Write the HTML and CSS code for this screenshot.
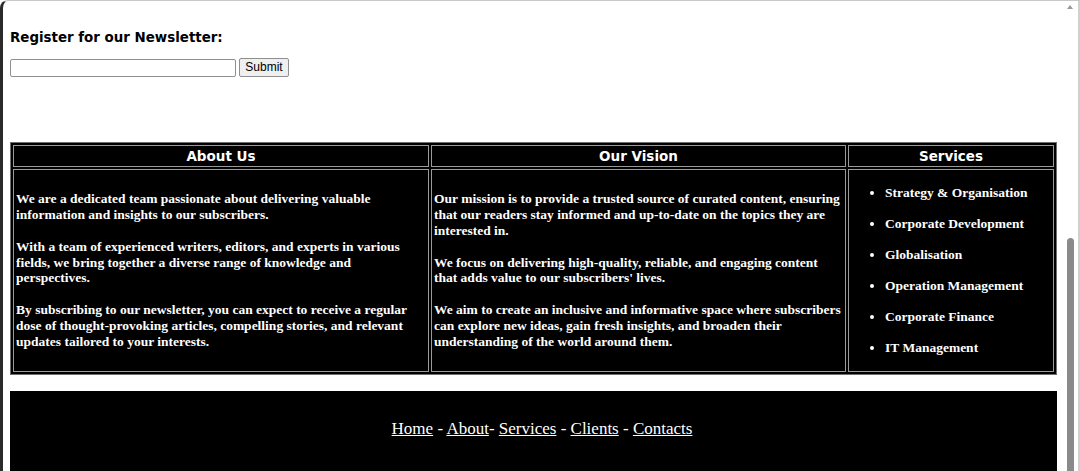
FILE: index.html
```html
<!DOCTYPE html>
<html>
<head>
<meta charset="utf-8">
<link rel="stylesheet" href="styles.css">
</head>
<body>
<div class="frame">
  <div class="page">
    <h3 class="nl-title">Register for our Newsletter:</h3>
    <form class="nl-form">
      <input class="nl-input" type="text">
      <button class="nl-btn" type="button">Submit</button>
    </form>
    <table class="info">
      <tr>
        <th class="c1">About Us</th>
        <th class="c2">Our Vision</th>
        <th class="c3">Services</th>
      </tr>
      <tr>
        <td>
          <p>We are a dedicated team passionate about delivering valuable information and insights to our subscribers.</p>
          <p>With a team of experienced writers, editors, and experts in various fields, we bring together a diverse range of knowledge and perspectives.</p>
          <p>By subscribing to our newsletter, you can expect to receive a regular dose of thought-provoking articles, compelling stories, and relevant updates tailored to your interests.</p>
        </td>
        <td>
          <p>Our mission is to provide a trusted source of curated content, ensuring that our readers stay informed and up-to-date on the topics they are interested in.</p>
          <p>We focus on delivering high-quality, reliable, and engaging content that adds value to our subscribers' lives.</p>
          <p>We aim to create an inclusive and informative space where subscribers can explore new ideas, gain fresh insights, and broaden their understanding of the world around them.</p>
        </td>
        <td>
          <ul class="services">
            <li>Strategy &amp; Organisation</li>
            <li>Corporate Development</li>
            <li>Globalisation</li>
            <li>Operation Management</li>
            <li>Corporate Finance</li>
            <li>IT Management</li>
          </ul>
        </td>
      </tr>
    </table>
    <footer class="foot">
      <a href="#">Home</a> - <a href="#">About</a>- <a href="#">Services</a> - <a href="#">Clients</a> - <a href="#">Contacts</a>
    </footer>
  </div>
  <div class="scrollbar">
    <div class="arrow"></div>
    <div class="thumb"></div>
  </div>
</div>
</body>
</html>
```

FILE: styles.css
```css
html, body {
  margin: 0;
  padding: 0;
  background: #fff;
  overflow: hidden;
}
.frame {
  display: flex;
  height: 471px;
  box-sizing: border-box;
  border-left: 3px solid #2b2b2b;
  border-top: 1px solid #c8c8c8;
  border-top-left-radius: 8px;
  overflow: hidden;
}
.page {
  flex: 1;
  padding: 0 5px 0 7px;
  overflow: hidden;
}
.nl-title {
  font-family: "DejaVu Sans", sans-serif;
  font-weight: bold;
  font-size: 13.4px;
  margin: 28px 0 12px 0;
  color: #000;
  line-height: 17px;
}
.nl-form {
  display: flex;
  gap: 3px;
  align-items: center;
  margin: 0;
}
.nl-input {
  width: 226px;
  height: 18px;
  box-sizing: border-box;
  border: 1px solid #8f8f8f;
  border-radius: 2px;
  padding: 0;
  margin: 0;
  background: #fff;
}
.nl-btn {
  height: 19px;
  width: 50px;
  box-sizing: border-box;
  font-family: "Liberation Sans", Arial, sans-serif;
  font-size: 12px;
  padding: 0;
  border: 1px solid #8f8f8f;
  border-radius: 2px;
  background: #efefef;
  color: #000;
  line-height: 15px;
}
.info {
  margin-top: 65px;
  width: 100%;
  border: 1px solid #6e6e6e;
  border-spacing: 2px;
  background: #000;
  color: #fff;
  table-layout: fixed;
}
.info th {
  font-family: "DejaVu Sans", sans-serif;
  font-size: 13.5px;
  font-weight: bold;
  border: 1px solid #9a9a9a;
  height: 20px;
  padding: 0;
  line-height: 18px;
}
.c1 { width: 414px; }
.c2 { width: 413px; }
.info td {
  border: 1px solid #9a9a9a;
  padding: 1px 2px;
  vertical-align: middle;
  font-family: "Liberation Serif", "Times New Roman", serif;
  font-weight: bold;
  font-size: 13.5px;
  line-height: 15.6px;
}
.info td p {
  margin: 16.5px 0;
}
.services {
  margin: 13.5px 0;
  padding-left: 34px;
}
.services li {
  margin-bottom: 15.6px;
}
.services li:last-child {
  margin-bottom: 0;
}
.foot {
  margin-top: 16px;
  background: #000;
  color: #fff;
  height: 120px;
  text-align: center;
  font-family: "Liberation Serif", "Times New Roman", serif;
  font-size: 17px;
  padding: 28px 0 0 17px;
  box-sizing: border-box;
}
.foot a {
  color: #fff;
  text-decoration: underline;
}
.scrollbar {
  width: 16px;
  position: relative;
  border-right: 2px solid #d0d0d0;
  background: #fff;
}
.arrow {
  margin: 4px auto 0;
  width: 0;
  height: 0;
  border-left: 3px solid transparent;
  border-right: 3px solid transparent;
  border-bottom: 4px solid #999;
}
.thumb {
  position: absolute;
  left: 5px;
  top: 237px;
  width: 7px;
  bottom: 0;
  background: #8a8a8a;
  border-radius: 4px 4px 0 0;
}
```
